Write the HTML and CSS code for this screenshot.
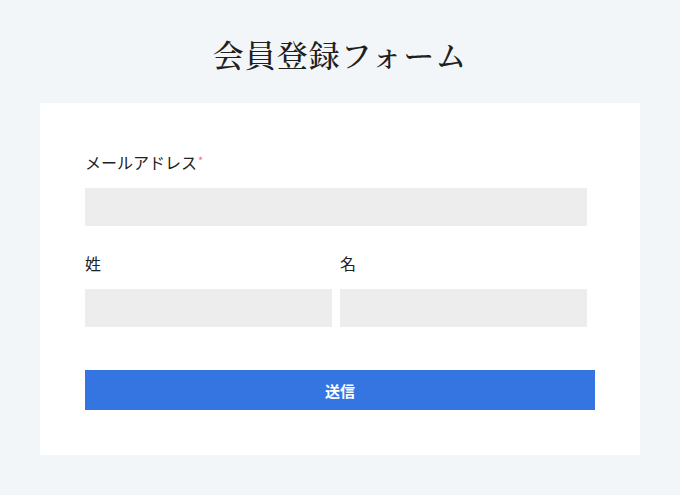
FILE: index.html
```html
<!DOCTYPE html>
<html lang="ja">
<head>
<meta charset="utf-8">
<title>会員登録フォーム</title>
<link rel="stylesheet" href="styles.css">
</head>
<body>
<h1 class="title">会員登録フォーム</h1>
<form class="card">
  <div class="field field-email">
    <label class="label">メールアドレス<span class="req">*</span></label>
    <div class="input"></div>
  </div>
  <div class="name-row">
    <div class="field">
      <label class="label">姓</label>
      <div class="input"></div>
    </div>
    <div class="field">
      <label class="label">名</label>
      <div class="input"></div>
    </div>
  </div>
  <button type="button" class="submit">送信</button>
</form>
</body>
</html>
```
FILE: styles.css
```css
html, body {
  margin: 0;
  padding: 0;
}
body {
  background: #f3f6f9;
  padding-top: 34px;
  font-family: "Noto Sans CJK JP", "Noto Sans", sans-serif;
  color: #222;
}
.title {
  margin: 0 0 29px;
  text-align: center;
  font-family: "Noto Serif CJK JP", "Liberation Serif", "Noto Sans CJK JP", serif;
  font-weight: 500;
  font-size: 31px;
  letter-spacing: 1px;
  line-height: 40px;
  color: #1f1f1f;
}
.card {
  display: block;
  margin: 0 40px;
  background: #fff;
  padding: 49px 45px 45px;
}
.field {
  display: flex;
  flex-direction: column;
}
.field-email {
  padding-right: 8px;
}
.label {
  display: block;
  height: 24px;
  font-size: 16px;
  line-height: 21px;
  margin-bottom: 12px;
  color: #222;
}
.req {
  color: #f36d78;
  font-size: 11px;
  line-height: 0;
  vertical-align: 4px;
  margin-left: 1px;
}
.input {
  height: 38px;
  background: #ededed;
}
.name-row {
  display: grid;
  grid-template-columns: 1fr 1fr;
  column-gap: 8px;
  padding-right: 8px;
  margin-top: 27px;
}
.submit {
  display: block;
  width: 100%;
  height: 40px;
  margin-top: 43px;
  border: 0;
  padding: 0;
  background: #3575e2;
  color: #fff;
  font-family: "Noto Sans CJK JP", sans-serif;
  font-weight: 700;
  font-size: 15px;
}
```
